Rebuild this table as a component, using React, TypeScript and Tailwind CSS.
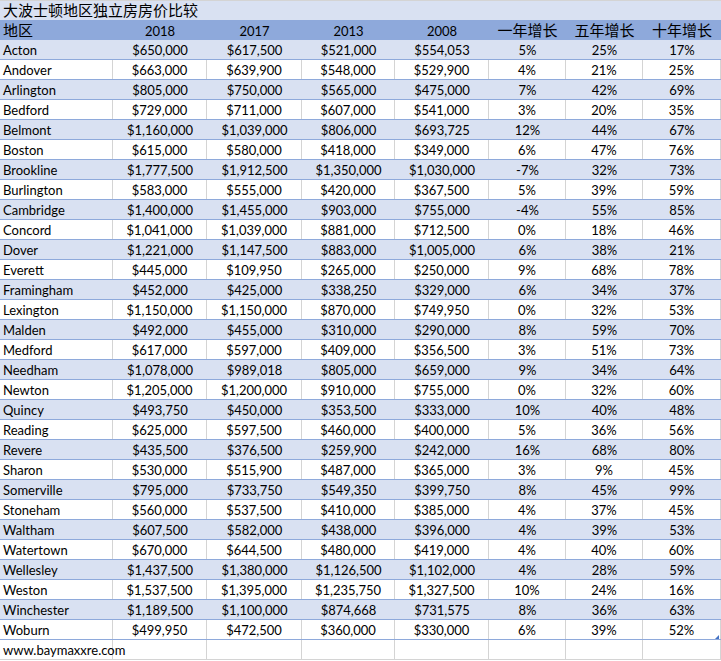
import React from "react";

const ROWS: string[][] = [
  ["Acton", "$650,000", "$617,500", "$521,000", "$554,053", "5%", "25%", "17%"],
  ["Andover", "$663,000", "$639,900", "$548,000", "$529,900", "4%", "21%", "25%"],
  ["Arlington", "$805,000", "$750,000", "$565,000", "$475,000", "7%", "42%", "69%"],
  ["Bedford", "$729,000", "$711,000", "$607,000", "$541,000", "3%", "20%", "35%"],
  ["Belmont", "$1,160,000", "$1,039,000", "$806,000", "$693,725", "12%", "44%", "67%"],
  ["Boston", "$615,000", "$580,000", "$418,000", "$349,000", "6%", "47%", "76%"],
  ["Brookline", "$1,777,500", "$1,912,500", "$1,350,000", "$1,030,000", "-7%", "32%", "73%"],
  ["Burlington", "$583,000", "$555,000", "$420,000", "$367,500", "5%", "39%", "59%"],
  ["Cambridge", "$1,400,000", "$1,455,000", "$903,000", "$755,000", "-4%", "55%", "85%"],
  ["Concord", "$1,041,000", "$1,039,000", "$881,000", "$712,500", "0%", "18%", "46%"],
  ["Dover", "$1,221,000", "$1,147,500", "$883,000", "$1,005,000", "6%", "38%", "21%"],
  ["Everett", "$445,000", "$109,950", "$265,000", "$250,000", "9%", "68%", "78%"],
  ["Framingham", "$452,000", "$425,000", "$338,250", "$329,000", "6%", "34%", "37%"],
  ["Lexington", "$1,150,000", "$1,150,000", "$870,000", "$749,950", "0%", "32%", "53%"],
  ["Malden", "$492,000", "$455,000", "$310,000", "$290,000", "8%", "59%", "70%"],
  ["Medford", "$617,000", "$597,000", "$409,000", "$356,500", "3%", "51%", "73%"],
  ["Needham", "$1,078,000", "$989,018", "$805,000", "$659,000", "9%", "34%", "64%"],
  ["Newton", "$1,205,000", "$1,200,000", "$910,000", "$755,000", "0%", "32%", "60%"],
  ["Quincy", "$493,750", "$450,000", "$353,500", "$333,000", "10%", "40%", "48%"],
  ["Reading", "$625,000", "$597,500", "$460,000", "$400,000", "5%", "36%", "56%"],
  ["Revere", "$435,500", "$376,500", "$259,900", "$242,000", "16%", "68%", "80%"],
  ["Sharon", "$530,000", "$515,900", "$487,000", "$365,000", "3%", "9%", "45%"],
  ["Somerville", "$795,000", "$733,750", "$549,350", "$399,750", "8%", "45%", "99%"],
  ["Stoneham", "$560,000", "$537,500", "$410,000", "$385,000", "4%", "37%", "45%"],
  ["Waltham", "$607,500", "$582,000", "$438,000", "$396,000", "4%", "39%", "53%"],
  ["Watertown", "$670,000", "$644,500", "$480,000", "$419,000", "4%", "40%", "60%"],
  ["Wellesley", "$1,437,500", "$1,380,000", "$1,126,500", "$1,102,000", "4%", "28%", "59%"],
  ["Weston", "$1,537,500", "$1,395,000", "$1,235,750", "$1,327,500", "10%", "24%", "16%"],
  ["Winchester", "$1,189,500", "$1,100,000", "$874,668", "$731,575", "8%", "36%", "63%"],
  ["Woburn", "$499,950", "$472,500", "$360,000", "$330,000", "6%", "39%", "52%"],
];

const GRID = "grid grid-cols-[113px_94px_95px_93px_94px_77px_77px_78px]";
const CJK = "font-['Noto_Sans_CJK_SC',sans-serif] text-[15px]";

const App: React.FC = () => {
  return (
    <div className="w-[721px] h-[661px] bg-white text-black font-['Lato','Noto_Sans_CJK_SC',sans-serif] text-[13px] overflow-hidden">
      {/* title */}
      <div className="h-[20px] border-t border-[#d4d4d4] bg-[#d9e1f2] pl-[3px] leading-[18px]">
        <span className={CJK}>大波士顿地区独立房房价比较</span>
      </div>

      {/* header */}
      <div className={`${GRID} h-[20px] bg-[#8ea9db] leading-[20px]`}>
        <div className="pl-[3px]">
          <span className={CJK}>地区</span>
        </div>
        {["2018", "2017", "2013", "2008"].map((y) => (
          <div key={y} className="text-center pt-[1px]">
            {y}
          </div>
        ))}
        {["一年增长", "五年增长", "十年增长"].map((h) => (
          <div key={h} className="text-center">
            <span className={CJK}>{h}</span>
          </div>
        ))}
      </div>

      {/* data */}
      {ROWS.map((row, i) => {
        const banded = i % 2 === 0;
        const last = i === ROWS.length - 1;
        return (
          <div
            key={row[0]}
            className={`${GRID} h-[20px] border-b border-[#8ea9db] ${banded ? "bg-[#d9e1f2]" : "bg-white"}`}
          >
            {row.map((cell, j) => (
              <div
                key={j}
                className={`relative pt-[2px] leading-[17px] whitespace-nowrap ${j === 0 ? "pl-[3px]" : "text-center"} ${
                  banded ? "" : "border-r border-[#d4d4d4]"
                }`}
              >
                {cell}
                {last && j === 7 && (
                  <div className="absolute right-[1px] bottom-0 w-0 h-0 border-l-[4px] border-l-transparent border-b-[4px] border-b-[#4472c4]" />
                )}
              </div>
            ))}
          </div>
        );
      })}

      {/* footer */}
      <div className={`${GRID} h-[20px] border-b border-[#d4d4d4]`}>
        {[0, 1, 2, 3, 4, 5, 6, 7].map((j) => (
          <div key={j} className="border-r border-[#d4d4d4] pt-[2px] leading-[17px] pl-[3px] whitespace-nowrap">
            {j === 0 ? "www.baymaxxre.com" : ""}
          </div>
        ))}
      </div>
    </div>
  );
};

export default App;
